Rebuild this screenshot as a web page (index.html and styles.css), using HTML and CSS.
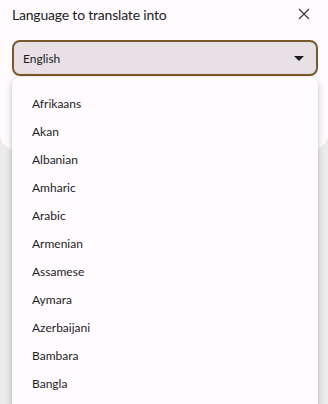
FILE: index.html
```html
<!DOCTYPE html>
<html>
<head>
<meta charset="utf-8">
<link rel="stylesheet" href="styles.css">
</head>
<body>
<div class="dialog">
  <div class="header">
    <div class="title">Language to translate into</div>
    <svg class="close" width="12" height="12" viewBox="0 0 12 12"><path d="M1 1L11 11M11 1L1 11" stroke="#444046" stroke-width="1.4" fill="none"/></svg>
  </div>
  <div class="select">
    <span>English</span>
    <svg class="arrow" width="10" height="5" viewBox="0 0 10 5"><path d="M0 0H10L5 5Z" fill="#1d1b1e"/></svg>
  </div>
</div>
<ul class="menu">
  <li>Afrikaans</li>
  <li>Akan</li>
  <li>Albanian</li>
  <li>Amharic</li>
  <li>Arabic</li>
  <li>Armenian</li>
  <li>Assamese</li>
  <li>Aymara</li>
  <li>Azerbaijani</li>
  <li>Bambara</li>
  <li>Bangla</li>
</ul>
</body>
</html>
```
FILE: styles.css
```css
html, body {
  margin: 0;
  padding: 0;
  height: 100%;
  overflow: hidden;
}
body {
  background: #ececec;
  font-family: Lato, "Noto Sans", sans-serif;
  color: #1d1b1e;
  position: relative;
}
.dialog {
  background: #fffbfe;
  height: 150px;
  border-radius: 0 0 16px 16px;
  padding: 0 10px 0 12px;
  box-sizing: border-box;
}
.header {
  display: flex;
  align-items: center;
  justify-content: space-between;
  height: 28px;
}
.title {
  font-size: 14px;
  letter-spacing: -0.2px;
  color: #1d1b1e;
}
.close {
  margin-right: 8px;
}
.select {
  margin-top: 12px;
  height: 36px;
  width: 306px;
  box-sizing: border-box;
  border: 2px solid #7a5a2c;
  border-radius: 8px;
  background: #e7e1e5;
  display: flex;
  align-items: center;
  justify-content: space-between;
  padding: 0 12px 0 9px;
  font-size: 12px;
}
.menu {
  position: absolute;
  left: 12px;
  top: 77px;
  bottom: -20px;
  width: 306px;
  margin: 0;
  padding: 13px 0 0 0;
  list-style: none;
  background: #fffbfe;
  border-radius: 8px;
  box-shadow: 0 2px 8px rgba(0,0,0,0.18), 0 1px 3px rgba(0,0,0,0.12);
}
.menu li {
  height: 28px;
  line-height: 28px;
  padding-left: 20px;
  font-size: 12px;
}
```
